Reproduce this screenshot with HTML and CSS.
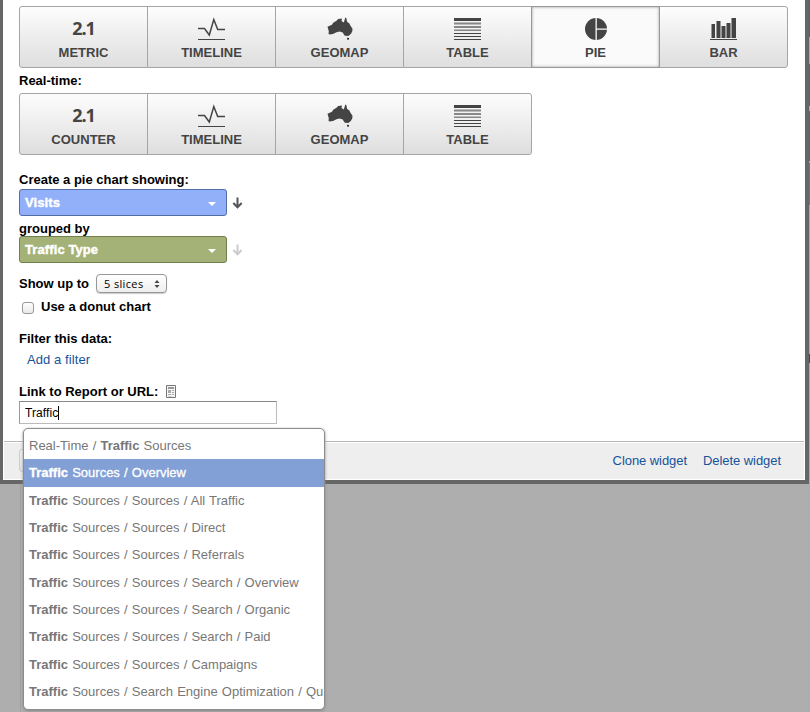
FILE: index.html
```html
<!DOCTYPE html>
<html lang="en">
<head>
<meta charset="utf-8">
<title>Widget settings</title>
<link rel="stylesheet" href="styles.css">
</head>
<body>
<svg class="defs" width="0" height="0" aria-hidden="true">
  <symbol id="timeline" viewBox="0 0 28 24">
    <path d="M0 11.500h6.500l4.800 6.500L15.800 2.500l3.900 10H27" fill="none" stroke="#444" stroke-width="1.500"/>
    <path d="M0 22h27v1H0z" fill="#444"/>
  </symbol>
  <symbol id="geomap" viewBox="0 0 28 24">
    <path d="M1.500 9.700 6 7.700l1.200-2L10.500 3.700 12.200 2l3.800-.6-.5 2.600 2.300 1.500L19.300.4l1 .6.900 4 2 1.300 1.300 2.500 2 2.900-.2 2.600-1.300 2.500-2.200 1.900-1.800.4-2.500-.7-1.800-2.800-3.200-1-3 .7-3.500 1.700-3.500.6-1-.8.300-2.500z" fill="#444"/>
    <path d="m21 20.700 2.200.2-.8 2.200-1-.3z" fill="#222"/>
  </symbol>
  <symbol id="table" viewBox="0 0 28 24">
    <path d="M0 1h27v3H0zM0 16h27v1H0zM0 19h27v1H0zM0 22h27v1H0z" fill="#444"/>
    <path d="M0 6h27v1H0zM0 9h27v2H0zM0 13h27v1H0z" fill="#888"/>
    <path d="M0 5h27v1H0zM0 7h27v1H0zM0 12h27v1H0z" fill="#bbb"/>
  </symbol>
  <symbol id="pie" viewBox="0 0 28 24">
    <circle cx="14" cy="12" r="11" fill="#444"/>
    <path d="M13.500 0h1.300v24h-1.300zM14 11.500h12v1.200H14z" fill="#fafafa"/>
  </symbol>
  <symbol id="bar" viewBox="0 0 28 24">
    <path d="M1 7h1v14H1zM6 4h1v17H6zM11 9h1v12h-1zM16 6h1v15h-1zM21 1h1v20h-1z" fill="#999"/>
    <path d="M2 7h3v14H2zM7 4h3.500v17H7zM12 9h3.500v12H12zM17 6h3.500v15H17zM22 1h4v20h-4zM0 22h27v1H0z" fill="#444"/>
  </symbol>
  <symbol id="down" viewBox="0 0 11 12">
    <path d="M5.500.500V10M1.300 6l4.200 4.300L9.700 6" fill="none" stroke="currentColor" stroke-width="2"/>
  </symbol>
</svg>
<div class="page">
  <div class="edge"></div>
  <main class="dialog">
    <div class="body">
      <div class="tabs">
        <div class="tab"><span class="num">2.1</span><span>METRIC</span></div>
        <div class="tab"><svg><use href="#timeline"/></svg><span>TIMELINE</span></div>
        <div class="tab"><svg><use href="#geomap"/></svg><span>GEOMAP</span></div>
        <div class="tab"><svg><use href="#table"/></svg><span>TABLE</span></div>
        <div class="tab active"><svg><use href="#pie"/></svg><span>PIE</span></div>
        <div class="tab"><svg><use href="#bar"/></svg><span>BAR</span></div>
      </div>
      <div class="label realtime">Real-time:</div>
      <div class="tabs short">
        <div class="tab"><span class="num">2.1</span><span>COUNTER</span></div>
        <div class="tab"><svg><use href="#timeline"/></svg><span>TIMELINE</span></div>
        <div class="tab"><svg><use href="#geomap"/></svg><span>GEOMAP</span></div>
        <div class="tab"><svg><use href="#table"/></svg><span>TABLE</span></div>
      </div>
      <div class="label showing">Create a pie chart showing:</div>
      <div class="pick-row">
        <div class="pick metric"><span>Visits</span><i></i></div>
        <svg class="sort"><use href="#down"/></svg>
      </div>
      <div class="label grouped">grouped by</div>
      <div class="pick-row">
        <div class="pick dimension"><span>Traffic Type</span><i></i></div>
        <svg class="sort off"><use href="#down"/></svg>
      </div>
      <div class="slices">
        <span class="label">Show up to</span>
        <div class="select"><span>5 slices</span><svg viewBox="0 0 6 8"><path d="M3 0l2.500 3h-5zM3 8l2.500-3h-5z" fill="#444"/></svg></div>
      </div>
      <div class="donut"><span class="check"></span><span class="label">Use a donut chart</span></div>
      <div class="label filter">Filter this data:</div>
      <a class="add">Add a filter</a>
      <div class="link-label">
        <span class="label">Link to Report or URL:</span>
        <svg class="report" viewBox="0 0 10 13">
          <path d="M.5.5h9v12h-9z" fill="#f6f6f6" stroke="#777"/>
          <path d="M2 2h6v2H2z" fill="#999"/><path d="M2 5h3v3H2zM6 5h2v1H6zM6 7h2v1H6zM2 9h3v1H2zM6 9h2v1H6zM2 11h4v.600H2z" fill="#aaa"/>
        </svg>
      </div>
      <div class="input"><span>Traffic</span><i class="caret"></i>
        <div class="menu">
          <div class="item">Real-Time / <b>Traffic</b> Sources</div>
          <div class="item selected"><b>Traffic</b> Sources / Overview</div>
          <div class="item"><b>Traffic</b> Sources / Sources / All Traffic</div>
          <div class="item"><b>Traffic</b> Sources / Sources / Direct</div>
          <div class="item"><b>Traffic</b> Sources / Sources / Referrals</div>
          <div class="item"><b>Traffic</b> Sources / Sources / Search / Overview</div>
          <div class="item"><b>Traffic</b> Sources / Sources / Search / Organic</div>
          <div class="item"><b>Traffic</b> Sources / Sources / Search / Paid</div>
          <div class="item"><b>Traffic</b> Sources / Sources / Campaigns</div>
          <div class="item"><b>Traffic</b> Sources / Search Engine Optimization / Qu</div>
        </div>
      </div>
    </div>
    <footer><span class="save"></span><a>Clone widget</a><a>Delete widget</a></footer>
  </main>
</div>
</body>
</html>
```
FILE: styles.css
```css
* { box-sizing: border-box; }
body { margin: 0; background: #aeaeae; font: 13px/15px "Liberation Sans", Arial, sans-serif; color: #000; }
svg { display: block; }
.defs { position: absolute; }
.page { position: relative; width: 810px; height: 712px; overflow: hidden; }
.page::after { content: ""; position: absolute; left: 20px; top: 484px; width: 1px; height: 228px; background: #a2a2a2; }
.edge { position: absolute; right: 0; top: 0; width: 1px; height: 484px; background: linear-gradient(#8c5530 0 37px, #aaa 37px 64px, #97543a 64px 106px, #aaa 106px 111px, #97543a 111px 161px, #aaa 161px 163px, #688447 163px 205px, #aaa 205px 354px, #414b50 354px 363px, #aaa 363px); }
.dialog { width: 809px; height: 484px; border: solid #666; border-width: 0 4px 4px 3px; background: #fff; padding: 0 1px 1px; }
.body { height: 441px; padding: 6px 15px 0; }
.label { font-weight: bold; }
.tabs { display: flex; width: 769px; height: 62px; border: 1px solid #a5a5a5; border-radius: 3px; background: linear-gradient(#fdfdfd, #dedede); }
.short { width: 513px; }
.tab { flex: 1; display: flex; flex-direction: column; align-items: center; padding-top: 10px; border-right: 1px solid #a5a5a5; color: #444; font-weight: bold; font-size: 13px; line-height: 16px; }
.tab:last-child { border-right: 0; }
.tab svg, .num { width: 28px; height: 24px; margin-bottom: 4px; }
.num { font: 700 18px/23px "Open Sans", sans-serif; letter-spacing: -1px; text-align: center; white-space: nowrap; }
.active { margin: -1px 0 -1px -1px; padding-top: 10px; border: 1px solid #999; background: #fafafa; box-shadow: inset 0 0 3px #999; }
.realtime { margin: 5px 0; }
.showing { margin-top: 17px; margin-bottom: 2px; }
.pick-row { display: flex; align-items: center; gap: 5px; }
.pick { display: flex; align-items: center; justify-content: space-between; width: 208px; height: 27px; padding: 0 10px 0 5px; border: 1px solid #536da6; border-radius: 3px; background: #92b0f9; color: #fff; font-weight: bold; letter-spacing: .1px; -webkit-text-stroke: .4px #fff; }
.dimension { border-color: #707f4c; background: #a4b278; }
.pick i { border: solid transparent; border-width: 4px 4px 0; border-top-color: #fff; margin-top: 2px; }
.sort { width: 11px; height: 12px; color: #555; }
.off { color: #ccc; }
.grouped { margin: 5px 0 0; }
.slices { display: flex; align-items: center; gap: 7px; margin-top: 11px; height: 19px; }
.select { display: flex; align-items: center; justify-content: space-between; width: 71px; height: 19px; padding: 0 6px 0 7px; border: 1px solid #979797; border-radius: 4px; background: linear-gradient(#fff, #eee); box-shadow: 0 1px 1px #ccc; font: 11px/16px "Open Sans", sans-serif; letter-spacing: .35px; }
.select svg { width: 6px; height: 8px; }
.donut { display: flex; align-items: center; gap: 7px; margin: 6px 0 0 3px; }
.check { width: 12px; height: 12px; margin-top: 3px; border: 1px solid #999; border-radius: 3px; background: linear-gradient(#fff, #e8e8e8); }
.filter { margin-top: 17px; }
a { color: #15539a; }
.add { display: block; margin: 6px 0 0 8px; letter-spacing: .08px; }
.link-label { display: flex; align-items: center; gap: 8px; margin-top: 17px; }
.report { width: 10px; height: 13px; }
.input { position: relative; display: flex; align-items: center; width: 258px; height: 23px; margin-top: 2px; padding: 1px 0 0 5px; border: 1px solid #bbb; border-top-color: #888; border-left-color: #999; font-size: 12px; letter-spacing: .1px; }
.caret { width: 1px; height: 14px; background: #000; }
.menu { position: absolute; z-index: 2; left: 3px; top: 26px; width: 302px; height: 282px; padding-top: 3px; overflow: hidden; border: 1px solid #8c8c8c; border-radius: 5px; background: #fff; box-shadow: 0 1px 3px #888; color: #777; font-size: 13px; letter-spacing: 0; word-spacing: .55px; white-space: nowrap; }
.item { height: 27.35px; padding-left: 5px; line-height: 27px; }
.selected { background: #829fd6; color: #fff; -webkit-text-stroke: .3px #fff; }
footer { display: flex; align-items: center; gap: 16px; height: 38px; padding: 0 23px 0 15px; border-top: 1px solid #b7b7b7; box-shadow: inset 0 1px #fff; background: #eee; letter-spacing: -.06px; }
.save { width: 80px; height: 23px; margin-right: auto; border: 1px solid #ccc; border-radius: 3px; background: linear-gradient(#f5f5f5, #e5e5e5); }
```
